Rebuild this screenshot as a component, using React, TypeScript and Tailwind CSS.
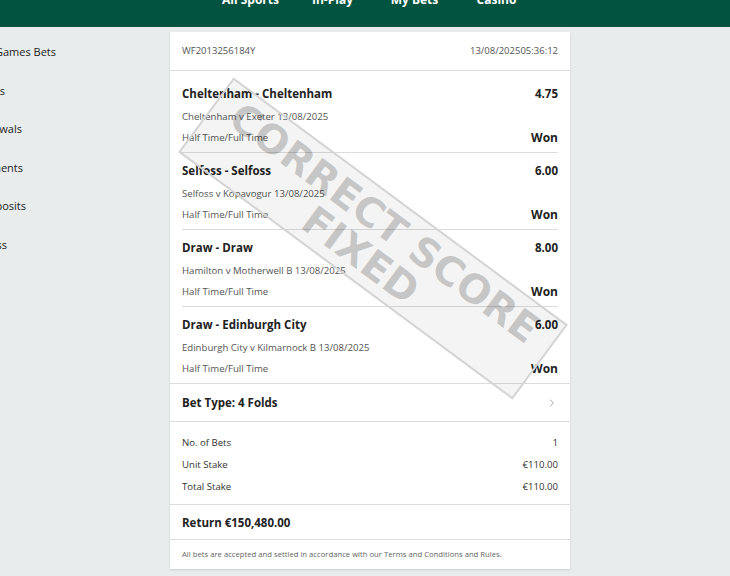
import { ChevronRight } from 'lucide-react';

const navItems = ['All Sports', 'In-Play', 'My Bets', 'Casino'];

const sideItems = [
  { label: 'Casino Games Bets', w: 'w-[56px]' },
  { label: 'Sports Bets', w: 'w-[5px]' },
  { label: 'Withdrawals', w: 'w-[22px]' },
  { label: 'Adjustments', w: 'w-[23px]' },
  { label: 'Deposits', w: 'w-[26px]' },
  { label: 'Profit & Loss', w: 'w-[7px]' },
];

const selections = [
  { pick: 'Cheltenham - Cheltenham', odds: '4.75', event: 'Cheltenham v Exeter 13/08/2025' },
  { pick: 'Selfoss - Selfoss', odds: '6.00', event: 'Selfoss v Kopavogur 13/08/2025' },
  { pick: 'Draw - Draw', odds: '8.00', event: 'Hamilton v Motherwell B 13/08/2025' },
  { pick: 'Draw - Edinburgh City', odds: '6.00', event: 'Edinburgh City v Kilmarnock B 13/08/2025' },
];

const stats = [
  ['No. of Bets', '1'],
  ['Unit Stake', '€110.00'],
  ['Total Stake', '€110.00'],
];

export default function App() {
  return (
    <div className="min-h-screen bg-[#e9ecec] font-['Open_Sans',sans-serif] text-[#222]">
      {/* top nav, mostly scrolled out of view */}
      <header className="h-[27px] bg-[#02533f] overflow-hidden">
        <nav className="flex justify-center pl-[17px] -mt-[7px]">
          {navItems.map((item) => (
            <div key={item} className="w-[82px] text-center text-[12px] font-bold text-white leading-[14px]">
              {item}
            </div>
          ))}
        </nav>
      </header>

      <div className="flex pt-[5px]">
        {/* account menu, clipped at the left edge */}
        <aside className="w-[170px] shrink-0 overflow-hidden pt-[12px]">
          {sideItems.map((s) => (
            <div key={s.label} className={`${s.w} h-[38.6px] flex justify-end whitespace-nowrap text-[11px] leading-[16px]`}>
              {s.label}
            </div>
          ))}
        </aside>

        <main className="w-[400px] shrink-0 bg-white shadow-[0_1px_2px_rgba(0,0,0,0.12)] relative overflow-hidden">
          <div className="h-[39px] px-3 flex items-center justify-between border-b border-[#dcdcdc] text-[9.5px] text-[#555]">
            <span>WF2013256184Y</span>
            <span>13/08/202505:36:12</span>
          </div>

          <div className="px-3 border-b border-[#dcdcdc]">
            {selections.map((sel, i) => (
              <div
                key={i}
                className={`${i === 0 ? 'pt-[14px]' : 'pt-[9px]'} pb-[6px] ${i < selections.length - 1 ? 'border-b border-[#dcdcdc]' : ''}`}
              >
                <div className="flex justify-between text-[11.5px] font-bold leading-[18px]">
                  <span>{sel.pick}</span>
                  <span>{sel.odds}</span>
                </div>
                <div className="mt-[7px] text-[9.6px] leading-[14px] text-[#555]">{sel.event}</div>
                <div className="mt-[6px] flex justify-between items-center leading-[16px]">
                  <span className="text-[9.6px] text-[#555]">Half Time/Full Time</span>
                  <span className="text-[12px] font-bold">Won</span>
                </div>
              </div>
            ))}
          </div>

          <div className="h-[38px] px-3 flex items-center justify-between border-b border-[#dcdcdc]">
            <span className="text-[11.5px] font-bold">Bet Type: 4 Folds</span>
            <ChevronRight size={12} strokeWidth={1.5} className="text-[#888]" />
          </div>

          <div className="px-3 pt-[10px] pb-[6px] border-b border-[#dcdcdc] text-[9.6px] text-[#333]">
            {stats.map(([k, v]) => (
              <div key={k} className="flex justify-between leading-[22px]">
                <span>{k}</span>
                <span>{v}</span>
              </div>
            ))}
          </div>

          <div className="h-[35px] px-3 flex items-center pt-[2px] border-b border-[#dcdcdc] text-[11.5px] font-bold">
            Return €150,480.00
          </div>

          <div className="h-[29px] px-3 flex items-center text-[7.7px] text-[#666]">
            All bets are accepted and settled in accordance with our Terms and Conditions and Rules.
          </div>

          {/* stamp over the slip */}
          <div className="absolute left-[-5px] top-[160px] w-[416px] h-[93px] rotate-[36.5deg] border-2 border-[#d4d4d4] bg-[rgba(0,0,0,0.045)] flex flex-col items-center justify-center pointer-events-none font-['DejaVu_Sans',sans-serif] font-bold text-[rgba(0,0,0,0.19)] text-[40px] leading-[40px]">
            <span>CORRECT SCORE</span>
            <span>FIXED</span>
          </div>
        </main>
      </div>
    </div>
  );
}
